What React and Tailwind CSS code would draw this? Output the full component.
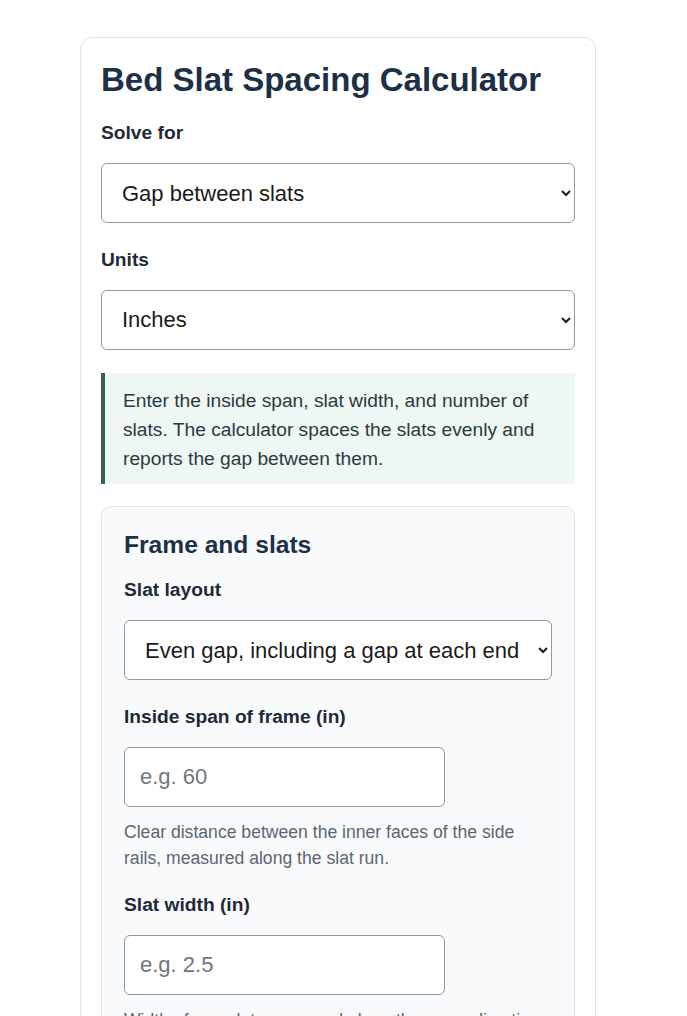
import { useState } from 'react'

const font = { fontFamily: '"Liberation Sans", Arial, sans-serif' }

function Field({ label, children, help, top = 'mt-[22px]', gap = 'mb-[15.5px]' }) {
  return (
    <div className={top}>
      <label className={`block text-[19.2px] leading-[28.8px] font-bold text-[#1f2a37] ${gap}`}>
        {label}
      </label>
      {children}
      {help && (
        <p className="mt-[12px] text-[17.6px] leading-[26.4px] text-[#5b6673]">{help}</p>
      )}
    </div>
  )
}

const selectCls =
  'block w-full h-[60px] pl-4 pr-2 text-[22px] text-[#1b1b1b] bg-white border border-[#8e99a6] rounded-[6px]'
const inputCls =
  'block w-3/4 h-[60px] px-[15px] text-[22px] text-[#1b1b1b] bg-white border border-[#8e99a6] rounded-[6px] placeholder:text-[#6f7780] outline-none'

export default function App() {
  const [solveFor, setSolveFor] = useState('gap')
  const [units, setUnits] = useState('in')
  const [layout, setLayout] = useState('ends')
  const [span, setSpan] = useState('')
  const [slatWidth, setSlatWidth] = useState('')

  return (
    <div className="min-h-screen bg-white pt-[37px] pb-10" style={font}>
      <div className="ml-[80px] w-[516px] bg-white border border-[#dde3ea] rounded-[12px] px-[20px] pt-[22px] pb-6">
        <h1 className="text-[33px] leading-[39.6px] font-bold text-[#1c3147]">
          Bed Slat Spacing Calculator
        </h1>

        <Field label="Solve for" top="mt-[19.5px]" gap="mb-[15.5px]">
          <select className={selectCls} value={solveFor} onChange={(e) => setSolveFor(e.target.value)}>
            <option value="gap">Gap between slats</option>
            <option value="count">Number of slats</option>
            <option value="width">Slat width</option>
          </select>
        </Field>

        <Field label="Units" top="mt-[23px]" gap="mb-[14.5px]">
          <select className={selectCls} value={units} onChange={(e) => setUnits(e.target.value)}>
            <option value="in">Inches</option>
            <option value="cm">Centimeters</option>
            <option value="mm">Millimeters</option>
          </select>
        </Field>

        {/* Intro note */}
        <div className="mt-[23px] border-l-4 border-[#2e6652] bg-[#eef7f3] pl-[18px] pr-4 pt-[14.5px] pb-[10.5px]">
          <p className="text-[19.2px] leading-[28.8px] text-[#2b3a42]">
            Enter the inside span, slat width, and number of slats. The calculator spaces the slats
            evenly and reports the gap between them.
          </p>
        </div>

        {/* Frame and slats */}
        <div className="mt-[22px] bg-[#f8fafc] border border-[#dde3ea] rounded-[10px] px-[22px] pt-[22.5px] pb-6">
          <h2 className="text-[24.6px] leading-[29.5px] font-bold text-[#1c3147]">Frame and slats</h2>

          <Field label="Slat layout" top="mt-[17px]" gap="mb-[15.5px]">
            <select className={selectCls} value={layout} onChange={(e) => setLayout(e.target.value)}>
              <option value="ends">Even gap, including a gap at each end</option>
              <option value="flush">Slats flush against each end</option>
            </select>
          </Field>

          <Field
            label="Inside span of frame (in)"
            top="mt-[23px]"
            gap="mb-[14.5px]"
            help="Clear distance between the inner faces of the side rails, measured along the slat run."
          >
            <input
              type="number"
              className={inputCls}
              placeholder="e.g. 60"
              value={span}
              onChange={(e) => setSpan(e.target.value)}
            />
          </Field>

          <Field
            label="Slat width (in)"
            top="mt-[19.5px]"
            help="Width of one slat, measured along the same direction as the span."
          >
            <input
              type="number"
              className={inputCls}
              placeholder="e.g. 2.5"
              value={slatWidth}
              onChange={(e) => setSlatWidth(e.target.value)}
            />
          </Field>
        </div>
      </div>
    </div>
  )
}
